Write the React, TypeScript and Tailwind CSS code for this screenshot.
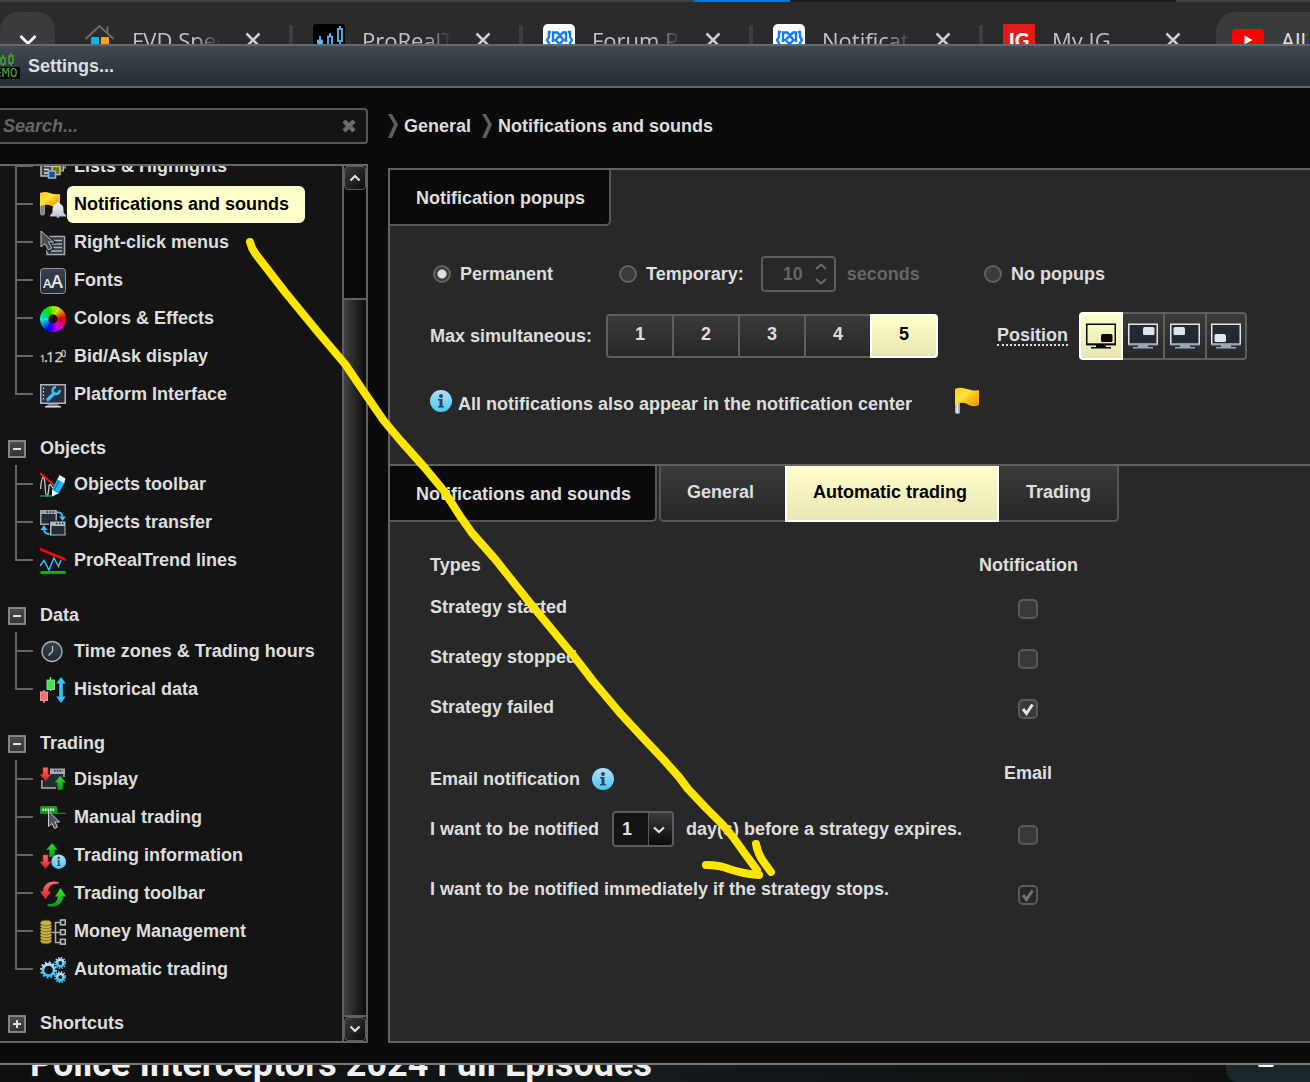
import React from "react";

const LABEL = "text-[#dedede]";

/* ---------- shared paint ---------- */

function Paints() {
  return (
    <svg width="0" height="0" className="absolute" aria-hidden="true">
      <defs>
        <linearGradient id="gold" x1="0" y1="0" x2="1" y2="1">
          <stop offset="0" stopColor="#ffc81e" />
          <stop offset="0.4" stopColor="#ffe23c" />
          <stop offset="0.6" stopColor="#fcc418" />
          <stop offset="1" stopColor="#e88a24" />
        </linearGradient>
        <linearGradient id="info" x1="0" y1="0" x2="0" y2="1">
          <stop offset="0" stopColor="#b4e0f8" />
          <stop offset="1" stopColor="#45c6fb" />
        </linearGradient>
        <linearGradient id="slate" x1="0" y1="0" x2="0" y2="1">
          <stop offset="0" stopColor="#36424d" />
          <stop offset="1" stopColor="#222b33" />
        </linearGradient>
        <linearGradient id="bell" x1="0" y1="0" x2="0" y2="1">
          <stop offset="0" stopColor="#ffffff" />
          <stop offset="1" stopColor="#b9c3d2" />
        </linearGradient>
        <linearGradient id="red" x1="0" y1="0" x2="0" y2="1">
          <stop offset="0" stopColor="#ff6b6b" />
          <stop offset="1" stopColor="#dc2020" />
        </linearGradient>
        <linearGradient id="green" x1="0" y1="0" x2="0" y2="1">
          <stop offset="0" stopColor="#3ddc3d" />
          <stop offset="1" stopColor="#0a9a14" />
        </linearGradient>
        <linearGradient id="sky" x1="0" y1="0" x2="0" y2="1">
          <stop offset="0" stopColor="#b5e3fb" />
          <stop offset="1" stopColor="#35bdf8" />
        </linearGradient>
      </defs>
    </svg>
  );
}

function Icon({ children }: { children: React.ReactNode }) {
  return (
    <svg viewBox="0 0 26 26" width="26" height="26" fill="none" className="mt-0.5 shrink-0" aria-hidden="true">
      {children}
    </svg>
  );
}

function Flag() {
  return (
    <svg viewBox="0 0 26 28" width="26" height="28" fill="none" aria-hidden="true">
      <rect x="1" y="12" width="5" height="15" rx="2" fill="#a9a9a9" />
      <rect x="2.5" y="12" width="1.5" height="14" fill="#f0f0f0" />
      <path d="M1 2 Q5 0 9 1 T17 3 Q21 4 25 3 V18 Q20 20.500 15 18 Q10 15 6 16 Q3 17 1 18 Z" fill="url(#gold)" />
    </svg>
  );
}

function InfoDot() {
  return (
    <svg viewBox="0 0 22 22" width="22" height="22" aria-hidden="true">
      <circle cx="11" cy="11" r="11" fill="url(#info)" />
      <circle cx="11" cy="6" r="2" fill="#314654" />
      <path d="M8 9 h4.500 v7 h1.500 v1.500 h-6 v-1.500 h1.500 v-5.500 h-1.500 Z" fill="#314654" />
    </svg>
  );
}

function Arrow({ x, y, up }: { x: number; y: number; up?: boolean }) {
  return up ? (
    <path
      d={`M${x + 5.5} ${y} l5.500 6.500 h-3 v7 h-5 v-7 h-3 Z`}
      fill="url(#green)"
      stroke="#0a8a12"
      strokeWidth="0.6"
    />
  ) : (
    <path
      d={`M${x + 5.5} ${y + 14} l5.500 -6.500 h-3 v-7 h-5 v7 h-3 Z`}
      fill="url(#red)"
      stroke="#c42222"
      strokeWidth="0.6"
    />
  );
}

function Gear({ cx, cy, r }: { cx: number; cy: number; r: number }) {
  const outer = r + 1.9;
  const dash = (2 * Math.PI * outer) / 24;
  return (
    <g stroke="url(#sky)">
      <circle cx={cx} cy={cy} r={r} strokeWidth="2.6" />
      <circle cx={cx} cy={cy} r={outer} strokeWidth="2" strokeDasharray={`${dash} ${dash}`} />
    </g>
  );
}

function Wheel() {
  const parts = Array.from({ length: 36 }, (_, i) => i);
  return (
    <Icon>
      {parts.map((i) => {
        const a = (i * 10 * Math.PI) / 180;
        const b = ((i * 10 + 11) * Math.PI) / 180;
        return (
          <path
            key={i}
            d={`M${13 + 4.5 * Math.cos(a)} ${13 - 4.5 * Math.sin(a)} L${13 + 13 * Math.cos(a)} ${13 - 13 * Math.sin(a)} A13 13 0 0 0 ${13 + 13 * Math.cos(b)} ${13 - 13 * Math.sin(b)} L${13 + 4.5 * Math.cos(b)} ${13 - 4.5 * Math.sin(b)} Z`}
            fill={`hsl(${i * 10} 100% ${i > 20 && i < 28 ? 50 : 46}%)`}
          />
        );
      })}
    </Icon>
  );
}

const cursor = "M1 1 V17 L5 13.500 L8.500 20 L12 18 L8.500 12 H13.500 Z";

const icons: Record<string, React.ReactNode> = {
  lists: (
    <Icon>
      <path d="M1 4 H13 V22 H1 Z" fill="#3b434a" stroke="#b8bfc5" strokeWidth="1.5" />
      <path d="M4 12 h7 M4 15.500 h5 M4 19 h5" stroke="#dfe3e6" strokeWidth="1.5" />
      <rect x="18" y="6" width="8" height="8" fill="#6b4c86" stroke="#c59be2" />
      <rect x="15.500" y="9" width="8" height="8" fill="#2f6c68" stroke="#8ad0c6" />
      <rect x="12" y="12.500" width="8" height="8" fill="#6f6a1c" stroke="#cfc85e" strokeWidth="1.5" />
      <rect x="8.500" y="17" width="7" height="7" fill="#1c4f8c" stroke="#7fb0ea" strokeWidth="1.600" />
    </Icon>
  ),
  notify: (
    <Icon>
      <rect x="0.5" y="12" width="4" height="11" rx="1.500" fill="#7e868d" stroke="#b3b9be" strokeWidth="0.700" />
      <path d="M0 1 Q5 -1 10 1 T20 2 V14 Q14 16 9 13 Q4 12 0 14.500 Z" fill="url(#gold)" />
      <path
        d="M18 10 q1.500 0 1.500 1.500 q4 1.500 4 6 v3 l2.500 3 v1 H10 v-1 l2.500 -3 v-3 q0 -4.500 4 -6 q0 -1.500 1.500 -1.500 Z"
        fill="url(#bell)"
      />
      <path d="M16 24.500 h4 l-2 1.500 Z" fill="#e8ecf2" />
    </Icon>
  ),
  menus: (
    <Icon>
      <rect x="7" y="6.500" width="17.500" height="18" fill="#303a43" stroke="#a2abb3" strokeWidth="1.500" />
      <path d="M11 10.500 h11 M11 14 h11 M11 17.500 h11 M11 21 h11" stroke="#aab3ba" strokeWidth="1.500" />
      <path d={cursor} fill="#2e3841" stroke="#131313" strokeWidth="3" />
      <path d={cursor} fill="#46525d" stroke="#b9c1c8" strokeWidth="1" />
    </Icon>
  ),
  fonts: (
    <Icon>
      <rect x="0.500" y="0.500" width="25" height="25" rx="3" fill="url(#slate)" stroke="#8f99a2" />
      <text x="3" y="20" fontSize="13" fontWeight="600" fontFamily="Open Sans, sans-serif" fill="#e9edf0">A</text>
      <text x="11" y="20" fontSize="18" fontWeight="600" fontFamily="Open Sans, sans-serif" fill="#e9edf0">A</text>
    </Icon>
  ),
  colors: <Wheel />,
  bidask: (
    <Icon>
      <g fontWeight="400" fontFamily="Open Sans, sans-serif" fill="#d0d0d0" stroke="#d0d0d0" strokeWidth="0.300">
        <text x="0" y="18" fontSize="9">1</text>
        <text x="4" y="18" fontSize="15">.</text>
        <text x="6" y="18" fontSize="15">12</text>
        <text x="21" y="13" fontSize="9">0</text>
      </g>
    </Icon>
  ),
  platform: (
    <Icon>
      <rect x="0.750" y="2.750" width="24.500" height="18.500" fill="#26303a" stroke="#b4b2bb" strokeWidth="1.500" />
      <path d="M3.500 5.500 v12" stroke="#dfe3e6" strokeWidth="1.200" strokeDasharray="1.500 2" />
      <path d="M8 17.500 L14 11.500" stroke="#39c0fa" strokeWidth="3.400" strokeLinecap="round" />
      <path d="M19.500 8 a3.500 3.500 0 1 1 -3.500 -3" stroke="#39c0fa" strokeWidth="2.600" />
      <path d="M8 22 h10 l2 3 h-14 Z" fill="#7d7b84" />
      <path d="M5 24.800 h16" stroke="#e4e2ea" strokeWidth="1.400" />
    </Icon>
  ),
  toolbar: (
    <Icon>
      <path d="M0.500 17 C2 2 4 2 5 12 C5.500 28 8 28 9 14 C10 10 11 14 13 16" stroke="#d8d8d8" strokeWidth="1.200" />
      <path d="M0 1 L15 14" stroke="#ff1010" strokeWidth="1.800" />
      <path d="M0 24 H12" stroke="#0d9a3c" strokeWidth="1.500" />
      <path d="M18 6 L25 10 L18.500 21.500 L12 17.500 Z" fill="#19b9f8" />
      <path d="M20 7 L14 18.700" stroke="#0a7cc0" strokeWidth="1.500" />
      <path d="M19.500 3 L25.500 6.500 L24 11 L17.500 7.500 Z" fill="#f4f7f9" />
      <path d="M12 17.500 L18.500 21.500 L12 24.500 Z" fill="#f4f7f9" />
    </Icon>
  ),
  transfer: (
    <Icon>
      <rect x="0" y="0" width="17" height="15" fill="#9ea4aa" />
      <rect x="1.500" y="4" width="14" height="9.500" fill="#232c35" />
      <path d="M6.500 2 h9" stroke="#20262c" strokeWidth="1.500" strokeDasharray="1.500 1.500" />
      <rect x="9.500" y="11" width="16.500" height="15" fill="#b4b9be" stroke="#141414" strokeWidth="1" />
      <rect x="11.500" y="16" width="13" height="8.500" fill="#232c35" />
      <path d="M16 13.500 h9" stroke="#20262c" strokeWidth="1.500" strokeDasharray="1.500 1.500" />
      <path d="M17 2.500 C21 2 22.500 4 22.500 8" stroke="#39c0fa" strokeWidth="1.800" />
      <path d="M19 6.500 h7 l-3.500 4.500 Z" fill="#39c0fa" />
      <path d="M9.500 24 C5.500 24 4 22 4 19" stroke="#39c0fa" strokeWidth="1.800" />
      <path d="M0.500 20 h7 l-3.500 -5 Z" fill="#39c0fa" />
    </Icon>
  ),
  trend: (
    <Icon>
      <path d="M1 1.500 L25 11.500" stroke="#ff0000" strokeWidth="2.800" strokeLinecap="round" />
      <path d="M0 18 L4 12.500 L9 22 L14 10 L18.500 18.500 L21 12" stroke="#39bdf8" strokeWidth="1.500" />
      <path d="M1.500 24.500 H24.500" stroke="#00b400" strokeWidth="3" strokeLinecap="round" />
    </Icon>
  ),
  clock: (
    <Icon>
      <circle cx="12" cy="12.500" r="10" fill="url(#slate)" stroke="#a7b0b8" strokeWidth="1.300" />
      <path d="M12.500 7 V12.500 L8.500 16.500" stroke="#bcc4ca" strokeWidth="1.300" />
    </Icon>
  ),
  history: (
    <Icon>
      <path d="M10.500 0 V14" stroke="#8ef08e" strokeWidth="1.200" />
      <path d="M4 13 V26" stroke="#ff9494" strokeWidth="1.400" />
      <rect x="7" y="3" width="7.500" height="9.500" fill="#3fe053" stroke="#a0f5a0" strokeWidth="0.800" />
      <rect x="0.400" y="15" width="7.200" height="8.500" fill="#ee6e6e" stroke="#ffaaaa" strokeWidth="0.800" />
      <path d="M21 0 l4.800 6.500 h-3 v13 h3 l-4.800 6.500 l-4.800 -6.500 h3 v-13 h-3 Z" fill="#39c0fa" />
    </Icon>
  ),
  display: (
    <Icon>
      <path d="M10 1.500 H25 V7 H10 Z" fill="#a2a9af" />
      <path d="M14 3.800 h9" stroke="#20262c" strokeWidth="1.500" strokeDasharray="1.500 1.300" />
      <rect x="4" y="7" width="19" height="13" fill="#232c35" />
      <path d="M2 13 V21 H16 M24 5 V10" stroke="#aeb4ba" strokeWidth="1.500" />
      <Arrow x={0} y={0} />
      <Arrow x={14.7} y={9} up />
    </Icon>
  ),
  manual: (
    <Icon>
      <rect x="0" y="1" width="17.500" height="8" rx="2" fill="#1e9a22" />
      <path d="M0 8.300 H26" stroke="#118a16" strokeWidth="1.300" />
      <path d="M2.500 4.800 h12.500" stroke="#d8f2d8" strokeWidth="2.400" strokeDasharray="1.600 0.900" />
      <path d="M8.500 6 V21.500 L12 18.500 L14.500 23.500 L17.500 22 L15 17 H19.500 Z" fill="#4a5661" stroke="#c9d0d5" strokeWidth="1" />
    </Icon>
  ),
  information: (
    <Icon>
      <Arrow x={6.5} y={0.3} up />
      <Arrow x={0} y={11.5} />
      <circle cx="18.700" cy="18.700" r="7.300" fill="url(#info)" />
      <circle cx="18.700" cy="15" r="1.200" fill="#2c4350" />
      <path d="M17.300 17.300 h2.200 v4.600 h1 v1 h-3.400 v-1 h0.900 v-3.600 h-0.700 Z" fill="#2c4350" />
    </Icon>
  ),
  tradebar: (
    <Icon>
      <path d="M18.500 1 C9 -1.500 3 4 3 10.500 H0 L5.500 18.500 L11 10.500 H8.500 C8 6 12 2 18.500 3 Z" fill="url(#red)" />
      <path d="M7.500 25 C17 27.500 23 22 23 15.500 H26 L20.500 7 L15 15.500 H17.500 C18 20 14 24 7.500 23 Z" fill="url(#green)" />
    </Icon>
  ),
  money: (
    <Icon>
      {[22, 19, 16, 13, 10, 7, 4].map((y) => (
        <ellipse key={y} cx="6" cy={y} rx="5.700" ry="2.800" fill="#cbb14a" stroke="#6d5c16" strokeWidth="0.800" />
      ))}
      <path d="M12 13.500 h8 M20 3.500 h-4.500 v20 h4.500" stroke="#a8adb2" strokeWidth="1.500" />
      <g fill="#1c2126" stroke="#b9bec3" strokeWidth="1.500">
        <rect x="20.500" y="1" width="4.800" height="4.800" />
        <rect x="20.500" y="10.800" width="4.800" height="4.800" />
        <rect x="20.500" y="20.300" width="4.800" height="4.800" />
      </g>
    </Icon>
  ),
  automatic: (
    <Icon>
      <Gear cx={8.5} cy={13} r={5.6} />
      <Gear cx={20.3} cy={6} r={3.2} />
      <Gear cx={20.3} cy={20.2} r={3.2} />
    </Icon>
  ),
};

/* ---------- browser strip ---------- */

function CloseX() {
  return (
    <svg viewBox="0 0 16 16" width="16" height="16" className="shrink-0" aria-hidden="true">
      <path d="M1.500 1.500 L14.500 14.500 M14.500 1.500 L1.500 14.500" stroke="#d0d0d0" strokeWidth="2.500" />
    </svg>
  );
}

function ForumLogo() {
  return (
    <svg viewBox="0 0 32 32" width="32" height="32" fill="none">
      <rect width="32" height="32" rx="5" fill="#ffffff" />
      <g stroke="#0f7cf0" strokeWidth="2.400">
        <path d="M8 8 H6 V13 L4 16 L6 19 V24 H8" />
        <path d="M25 8 H27 V13 L29 16 L27 19 V24 H25" />
        <path d="M10 18 V8.500 H14.500 L20.500 16 L16.500 20 L12.500 16 L20 8.500 H23 V18" />
      </g>
    </svg>
  );
}

const tabs: { title: string; logo: React.ReactNode }[] = [
  {
    title: "FVD Speed Dial",
    logo: (
      <svg viewBox="0 0 32 32" width="32" height="32" fill="none">
        <path d="M2.500 15 L16.500 2 L30.500 15 M24.500 9 V2.500" stroke="#6e6e6e" strokeWidth="2" />
        <rect x="8" y="13" width="8" height="8" rx="1" fill="#10aeea" />
        <rect x="18" y="13" width="8" height="8" rx="1" fill="#ffa40e" />
      </svg>
    ),
  },
  {
    title: "ProRealTime",
    logo: (
      <svg viewBox="0 0 32 32" width="32" height="32" fill="none">
        <rect width="32" height="32" rx="3" fill="#000000" />
        <g stroke="#5cb8f4" strokeWidth="1.800">
          <path d="M7 12 V28 M17 9 V13 M27 2 V5 M27 17 V20" />
          <rect x="5" y="16.500" width="4" height="8" fill="#5cb8f4" />
          <rect x="15" y="12.500" width="4" height="9" />
          <rect x="25" y="5" width="4" height="12" />
        </g>
      </svg>
    ),
  },
  { title: "Forum ProRealTime", logo: <ForumLogo /> },
  { title: "Notifications", logo: <ForumLogo /> },
  {
    title: "My IG",
    logo: (
      <span className="flex size-8 items-center justify-center bg-[#e21b1b] font-['Lato'] text-[20px] font-black text-white">
        IG
      </span>
    ),
  },
];

function BrowserStrip() {
  return (
    <header className="h-[44px] shrink-0 overflow-hidden bg-[#2b2b2b] font-['Open_Sans',sans-serif] text-[22px] text-[#c4c4c4]">
      <div className="flex h-0.5">
        <span className="w-[694px] bg-[#414141]" />
        <span className="w-24 bg-[#0078d7]" />
        <span className="w-[386px] bg-[#1c1c1c]" />
        <span className="flex-1 bg-[#414141]" />
      </div>
      <div className="flex">
        <div className="w-[63px] shrink-0 pt-2.5">
          <button aria-label="Search tabs" className="flex h-14 w-[55px] justify-center rounded-t-[18px] bg-[#3b3b3b] pt-[22px]">
            <svg viewBox="0 0 18 12" width="18" height="12">
              <path d="M1.500 2 L9 9.500 L16.500 2" fill="none" stroke="#ffffff" strokeWidth="2.800" />
            </svg>
          </button>
        </div>
        {tabs.map((tab, i) => (
          <div key={tab.title} className="flex h-[76px] w-[230px] shrink-0 items-center pl-5">
            {tab.logo}
            <span className="ml-[17px] w-[89px] shrink-0 overflow-hidden whitespace-nowrap [mask-image:linear-gradient(to_right,#000_70%,transparent)]">
              {tab.title}
            </span>
            <button aria-label={`Close ${tab.title}`} className="ml-6">
              <CloseX />
            </button>
            {i < 4 && <span className="ml-auto h-[30px] w-1 rounded bg-[#3e3e3e]" />}
          </div>
        ))}
        <div className="ml-[3px] flex h-[66px] flex-1 items-center self-end overflow-hidden rounded-tl-[20px] bg-[#3b3b3b] pb-2.5 pl-4 text-[#e0e0e0]">
          <svg viewBox="0 0 32 22" width="32" height="22" className="shrink-0">
            <rect width="32" height="22" rx="4" fill="#ff0000" />
            <path d="M12.500 6.500 L20.500 11 L12.500 15.500 Z" fill="#ffffff" />
          </svg>
          <span className="ml-[17px] whitespace-nowrap">All</span>
        </div>
      </div>
    </header>
  );
}

/* ---------- settings tree ---------- */

type Item = { icon: string; label: string; active?: boolean };

const groups: { title?: string; items: Item[]; extra?: boolean }[] = [
  {
    items: [
      { icon: "lists", label: "Lists & Highlights" },
      { icon: "notify", label: "Notifications and sounds", active: true },
      { icon: "menus", label: "Right-click menus" },
      { icon: "fonts", label: "Fonts" },
      { icon: "colors", label: "Colors & Effects" },
      { icon: "bidask", label: "Bid/Ask display" },
      { icon: "platform", label: "Platform Interface" },
    ],
  },
  {
    title: "Objects",
    extra: true,
    items: [
      { icon: "toolbar", label: "Objects toolbar" },
      { icon: "transfer", label: "Objects transfer" },
      { icon: "trend", label: "ProRealTrend lines" },
    ],
  },
  {
    title: "Data",
    items: [
      { icon: "clock", label: "Time zones & Trading hours" },
      { icon: "history", label: "Historical data" },
    ],
  },
  {
    title: "Trading",
    items: [
      { icon: "display", label: "Display" },
      { icon: "manual", label: "Manual trading" },
      { icon: "information", label: "Trading information" },
      { icon: "tradebar", label: "Trading toolbar" },
      { icon: "money", label: "Money Management" },
      { icon: "automatic", label: "Automatic trading" },
    ],
  },
  { title: "Shortcuts", items: [] },
];

function Tree() {
  return (
    <nav className="-mt-[19px] flex flex-col gap-[18px]">
      {groups.map((group) => (
        <section key={group.title ?? "top"} className={group.extra ? "pb-px" : ""}>
          {group.title && (
            <button className="flex h-[34px] w-full items-center pl-2 text-left">
              <span className="mt-0.5 flex size-[18px] items-center justify-center border-2 border-[#858585] bg-linear-to-b from-[#4c4c4c] to-[#343434]">
                <svg viewBox="0 0 10 10" width="10" height="10" stroke="#e0e0e0" strokeWidth="2">
                  <path d={group.items.length ? "M1 5 H9" : "M1 5 H9 M5 1 V9"} />
                </svg>
              </span>
              <span className="ml-3.5">{group.title}</span>
            </button>
          )}
          <ul>
            {group.items.map((item, i) => (
              <li key={item.label} className="flex h-[38px] items-center pl-[15px]">
                <span className="flex h-full w-[18px] flex-col">
                  <span className="h-5 border-b-2 border-l-2 border-[#666666]" />
                  {i < group.items.length - 1 && <span className="flex-1 border-l-2 border-[#666666]" />}
                </span>
                <a href="#" className="ml-[7px] flex items-center whitespace-nowrap">
                  {icons[item.icon]}
                  <span
                    className={
                      item.active
                        ? "ml-px flex h-[37px] items-center rounded-md bg-[#ffffcb] pr-4 pl-[7px] text-black"
                        : "ml-px pl-[7px]"
                    }
                  >
                    {item.label}
                  </span>
                </a>
              </li>
            ))}
          </ul>
        </section>
      ))}
    </nav>
  );
}

function ScrollButton({ d, label }: { d: string; label: string }) {
  return (
    <button
      aria-label={label}
      className="flex h-6 shrink-0 items-center justify-center rounded border border-[#5c5c5c] bg-linear-to-br from-[#3c3c3c] to-[#0c0c0c]"
    >
      <svg viewBox="0 0 12 8" width="12" height="8" fill="none" stroke="#e4e4e4" strokeWidth="2.200">
        <path d={d} />
      </svg>
    </button>
  );
}

function Sidebar() {
  return (
    <aside className="flex w-[368px] shrink-0 flex-col pt-5">
      <div className="flex h-9 items-center rounded-r border-2 border-l-0 border-[#565656] bg-[#141414] pr-2.5 pl-[3px]">
        <input
          type="text"
          aria-label="Search settings"
          placeholder="Search..."
          className="min-w-0 flex-1 bg-transparent font-bold italic outline-none placeholder:text-[#666666]"
        />
        <button aria-label="Clear search">
          <svg viewBox="0 0 14 14" width="14" height="14">
            <path d="M2 2 L12 12 M12 2 L2 12" stroke="#6c6c6c" strokeWidth="4.500" />
          </svg>
        </button>
      </div>
      <div className="mt-5 flex flex-1 border-y-2 border-[#666666] bg-[#141414]">
        <div className="min-w-0 flex-1 overflow-hidden">
          <Tree />
        </div>
        <div className="flex w-[26px] flex-col border-x-2 border-[#616161] bg-[#0a0a0a]">
          <ScrollButton label="Scroll up" d="M1.500 6.500 L6 2 L10.500 6.500" />
          <div className="mt-[108px] flex-1 border-y-2 border-[#616161] bg-linear-to-r from-[#424242] to-[#0c0c0c]" />
          <ScrollButton label="Scroll down" d="M1.500 1.500 L6 6 L10.500 1.500" />
        </div>
      </div>
    </aside>
  );
}

/* ---------- main panel ---------- */

function Crumb({ children }: { children: string }) {
  return (
    <li className="flex items-center gap-1.5">
      <svg viewBox="0 0 10 24" width="10" height="24" fill="#5e5e5e" aria-hidden="true">
        <path d="M0 0 H4 L10 10.500 L4 24 H0 L6 10.500 Z" />
      </svg>
      <a href="#">{children}</a>
    </li>
  );
}

function Radio({ id, label, checked }: { id: string; label: string; checked?: boolean }) {
  return (
    <>
      <input
        type="radio"
        name="popups"
        id={id}
        defaultChecked={checked}
        className="size-[18px] shrink-0 appearance-none rounded-full border-2 border-[#626262] bg-[#3c3c3c] checked:bg-[radial-gradient(circle,#dedede_4px,#3c3c3c_5px)]"
      />
      <label htmlFor={id} className="ml-[9px] whitespace-nowrap">
        {label}
      </label>
    </>
  );
}

function Check({ id, checked, disabled }: { id: string; checked?: boolean; disabled?: boolean }) {
  return (
    <span className="relative inline-block size-5 align-middle">
      <input
        type="checkbox"
        id={id}
        defaultChecked={checked}
        disabled={disabled}
        className="block size-5 appearance-none rounded-[5px] border-2 border-[#5a5a5a] bg-[#3a3a3a] disabled:checked:bg-[#282828]"
      />
      {checked && (
        <svg viewBox="0 0 20 20" width="20" height="20" fill="none" className="pointer-events-none absolute inset-0">
          <path d="M5 10 L8.500 14.500 L14.500 5.500" stroke={disabled ? "#747474" : "#e4e4e4"} strokeWidth="3" />
        </svg>
      )}
    </span>
  );
}

const corners = [
  { name: "Bottom right", x: 15, y: 11 },
  { name: "Top right", x: 15, y: 4 },
  { name: "Top left", x: 3.5, y: 4 },
  { name: "Bottom left", x: 3.5, y: 11 },
];

function Screen({ x, y, on }: { x: number; y: number; on: boolean }) {
  const line = on ? "#0a0a0a" : "#dfe7ee";
  return (
    <svg viewBox="0 0 30 26" width="30" height="26" className="shrink-0">
      <rect x="0.750" y="1.250" width="28.500" height="20" fill={on ? "none" : "#212a33"} stroke={line} strokeWidth="1.500" />
      <path d="M0 21.500 H30" stroke={on ? "#0a0a0a" : "#9aa7b5"} strokeWidth="1.800" />
      <rect x={x} y={y} width="11.500" height="8" rx="1.500" fill={line} />
      <path d="M10 22 H20 V24 H25 V25.500 H5 V24 H10 Z" fill={on ? "#0a0a0a" : "#9aa7b5"} />
    </svg>
  );
}

function Popups() {
  return (
    <section className="flex h-[296px] flex-col items-start border-b-2 border-[#626262]">
      <h2 className="flex h-[56px] items-center rounded-br-[5px] border-r-2 border-b-2 border-[#565656] bg-[#0a0a0a] pt-0.5 pr-6 pl-[26px]">
        Notification popups
      </h2>
      <div className="mt-[30px] flex h-9 items-center pl-[43px]">
        <div className="flex w-[186px] items-center">
          <Radio id="permanent" label="Permanent" checked />
        </div>
        <div className="flex w-[365px] items-center">
          <Radio id="temporary" label="Temporary:" />
          <span className="ml-[17px] flex h-9 w-[75px] items-center rounded border-2 border-[#5c5c5c] text-[#666666]">
            <input
              type="text"
              disabled
              aria-label="Popup duration in seconds"
              defaultValue="10"
              className="w-10 bg-transparent text-right font-bold"
            />
            <svg viewBox="0 0 12 22" width="12" height="22" fill="none" stroke="#6c6c6c" strokeWidth="2" className="ml-3">
              <path d="M1 6 L6 1.500 L11 6 M1 16 L6 20.500 L11 16" />
            </svg>
          </span>
          <span className="ml-[11px] text-[#666666]">seconds</span>
        </div>
        <div className="flex items-center">
          <Radio id="none" label="No popups" />
        </div>
      </div>
      <div className="mt-5 flex h-12 items-center pl-10">
        <span className="w-44 whitespace-nowrap">Max simultaneous:</span>
        <div role="group" aria-label="Max simultaneous" className="flex">
          {[1, 2, 3, 4, 5].map((n) => (
            <button
              key={n}
              className={
                n === 5
                  ? "z-10 -ml-0.5 h-11 w-[68px] rounded-r border-2 border-white bg-linear-to-b from-[#ffffcb] to-[#e8e6b4] pb-1 text-black"
                  : "-ml-0.5 h-11 w-[68px] border-2 border-[#5f5f5f] bg-linear-to-b from-[#3b3b3b] to-[#272727] pb-1 first:ml-0 first:rounded-l"
              }
            >
              {n}
            </button>
          ))}
        </div>
        <span className="ml-[59px] w-[71px] border-b-2 border-dotted border-[#dedede] leading-[18px]">Position</span>
        <div role="group" aria-label="Position" className="ml-[11px] flex">
          {corners.map((c, i) => (
            <button
              key={c.name}
              aria-label={c.name}
              className={
                i === 0
                  ? "z-10 flex h-12 w-11 items-center justify-center rounded-l border-2 border-white bg-linear-to-b from-[#ffffcb] to-[#e8e6b4]"
                  : "-ml-0.5 flex h-12 w-11 items-center justify-center border-2 border-[#5f5f5f] bg-linear-to-b from-[#3b3b3b] to-[#272727] last:w-[42px] last:rounded-r"
              }
            >
              <Screen x={c.x} y={c.y} on={i === 0} />
            </button>
          ))}
        </div>
      </div>
      <div className="mt-[27px] flex h-7 items-center pl-10">
        <InfoDot />
        <p className="mt-1.5 ml-1.5 whitespace-nowrap">All notifications also appear in the notification center</p>
        <span className="ml-[42px]">
          <Flag />
        </span>
      </div>
    </section>
  );
}

const idle = "border-b-2 border-[#565656] bg-linear-to-b from-[#3b3b3b] to-[#272727]";

function Sounds() {
  return (
    <section>
      <div className="flex h-[56px] items-stretch whitespace-nowrap">
        <h2 className="flex items-center rounded-br-[5px] border-r-2 border-b-2 border-[#565656] bg-[#0a0a0a] pt-0.5 pr-6 pl-[26px]">
          Notifications and sounds
        </h2>
        <div role="tablist" className="flex">
          <button role="tab" className={`ml-0.5 rounded-bl-[5px] border-l-2 pr-[31px] pb-0.5 pl-[26px] ${idle}`}>
            General
          </button>
          <button
            role="tab"
            aria-selected="true"
            className="border-2 border-t-0 border-white bg-linear-to-b from-[#ffffcb] to-[#e8e6b4] pr-[30px] pb-0.5 pl-[26px] text-black"
          >
            Automatic trading
          </button>
          <button role="tab" className={`rounded-br-[5px] border-r-2 pr-[26px] pb-0.5 pl-[27px] ${idle}`}>
            Trading
          </button>
        </div>
      </div>

      <table className="mt-[25px] ml-10 w-[647px] table-fixed">
        <thead>
          <tr className="h-9">
            <th className="w-[549px] text-left">Types</th>
            <th>Notification</th>
          </tr>
        </thead>
        <tbody>
          {["started", "stopped", "failed"].map((state) => (
            <tr key={state} className="h-[50px]">
              <td className="pb-0.5">
                <label htmlFor={state}>Strategy {state}</label>
              </td>
              <td className="text-center">
                <Check id={state} checked={state === "failed"} />
              </td>
            </tr>
          ))}
        </tbody>
      </table>

      <table className="mt-[21px] ml-10 w-[647px] table-fixed">
        <thead>
          <tr className="h-[50px]">
            <th className="w-[549px] text-left">
              <span className="flex items-center gap-3">
                Email notification <InfoDot />
              </span>
            </th>
            <th className="pb-3">Email</th>
          </tr>
        </thead>
        <tbody>
          <tr className="h-[50px]">
            <td>
              <div className="flex items-center whitespace-nowrap">
                <label htmlFor="expiry">I want to be notified</label>
                <span className="relative mr-3 ml-[13px] h-9 w-[62px]">
                  <select
                    aria-label="Days before expiry"
                    className="size-full appearance-none rounded border-2 border-[#5c5c5c] bg-[linear-gradient(to_right,#141414_34px,#5c5c5c_34px,#5c5c5c_35px,transparent_35px),linear-gradient(#3c3c3c,#0a0a0a)] pl-2 font-bold"
                  >
                    <option>1</option>
                    <option>2</option>
                    <option>3</option>
                  </select>
                  <svg
                    viewBox="0 0 12 8"
                    width="12"
                    height="8"
                    fill="none"
                    className="pointer-events-none absolute top-[15px] right-[9px]"
                  >
                    <path d="M1 1.500 L6 6 L11 1.500" stroke="#e4e4e4" strokeWidth="2.200" />
                  </svg>
                </span>
                <label htmlFor="expiry">day(s) before a strategy expires.</label>
              </div>
            </td>
            <td className="pt-2.5 text-center">
              <Check id="expiry" disabled />
            </td>
          </tr>
          <tr className="h-[70px]">
            <td>
              <label htmlFor="stops">I want to be notified immediately if the strategy stops.</label>
            </td>
            <td className="pt-2.5 text-center">
              <Check id="stops" checked disabled />
            </td>
          </tr>
        </tbody>
      </table>
    </section>
  );
}

/* Hand-drawn pointer laid over the dialog. */
function Marker() {
  return (
    <svg
      viewBox="0 0 1310 1082"
      width="1310"
      height="1082"
      fill="none"
      stroke="#ffe600"
      strokeWidth="8"
      strokeLinecap="round"
      strokeLinejoin="round"
      className="pointer-events-none absolute top-0 left-0 z-20"
      aria-hidden="true"
    >
      <path d="M250 242 Q252 250 258 257 L285 292 L317 331 L345 364 L364 392 L384 421 L400 440 L425 468 L444 491 L460 516 L472 533 L495 559 L530 603 L573 655 L593 681 L620 713 L645 740 L663 759 L679 777 L688 789 L706 808 L722 824 L733 837 L743 851 L757 870" />
      <path d="M706 865 Q720 865 729 869 Q744 874 759 875" />
      <path d="M756 844 Q758 854 763 861 L771 872" />
    </svg>
  );
}

export default function App() {
  return (
    <div className="relative flex min-h-screen flex-col overflow-hidden bg-[#0a0a0a]">
      <Paints />
      <BrowserStrip />
      <div className={`flex flex-1 flex-col border-b-2 border-[#777777] font-['Liberation_Sans',Arial,sans-serif] text-[18px] leading-6 font-bold ${LABEL}`}>
        <div className="flex h-11 items-center border-y-2 border-[#5f6a72] bg-linear-to-b from-[#414a51] to-[#252d34]">
          <svg viewBox="0 0 20 26" width="20" height="26" fill="none" aria-hidden="true">
            <g stroke="#45a62e" strokeWidth="1.500">
              <path d="M3 2 V5 M3 11 V13 M11 0 V3 M11 10 V13" />
              <rect x="1" y="5" width="4" height="6" />
              <rect x="9" y="3" width="4" height="7" />
            </g>
            <rect x="-4" y="14" width="24" height="12" rx="1" fill="#000000" />
            <text x="-6" y="24" fontSize="13" fontFamily="DejaVu Sans Mono, monospace" fontWeight="400" fill="#4cb034">EMO</text>
          </svg>
          <h1 className="ml-2">Settings...</h1>
        </div>
        <div className="flex flex-1 gap-5 pb-5">
          <Sidebar />
          <main className="flex min-w-0 flex-1 flex-col">
            <ol className="flex h-20 items-center gap-[11px] pb-1">
              <Crumb>General</Crumb>
              <Crumb>Notifications and sounds</Crumb>
            </ol>
            <div className="flex-1 border-2 border-r-0 border-[#626262] bg-[#282828]">
              <Popups />
              <Sounds />
            </div>
          </main>
        </div>
      </div>
      <footer className="flex h-[17px] shrink-0 justify-between overflow-hidden bg-linear-to-r from-[#0f0f0f] via-[#14191b] to-[#0f0f0f] font-['Roboto',sans-serif]">
        <p className="-mt-[19px] ml-[30px] text-[36px] leading-9 font-bold whitespace-nowrap text-[#f1f1f1]">
          Police Interceptors 2024 Full Episodes
        </p>
        <div className="flex w-[84px] justify-center rounded-bl-xl bg-[#1b262b] pr-1">
          <span className="h-0.5 w-4 rounded-b-full bg-white" />
        </div>
      </footer>
      <Marker />
    </div>
  );
}
